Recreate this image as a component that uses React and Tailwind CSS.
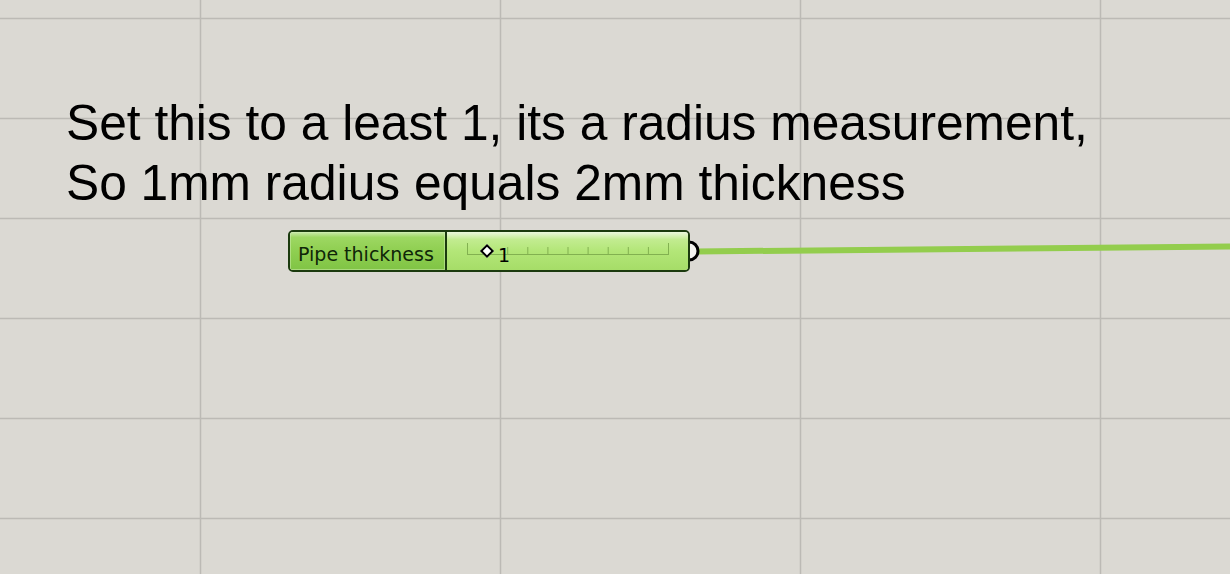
import React from 'react';

function Grid() {
  const xs = [200, 500, 800, 1100];
  const ys = [18, 118, 218, 318, 418, 518];
  return (
    <svg className="absolute inset-0" width="1230" height="574">
      {xs.map((x) => (
        <line key={'x' + x} x1={x + 0.5} y1="0" x2={x + 0.5} y2="574" stroke="#bcbab5" strokeWidth="1.5" />
      ))}
      {ys.map((y) => (
        <line key={'y' + y} x1="0" y1={y + 0.5} x2="1230" y2={y + 0.5} stroke="#bcbab5" strokeWidth="1.5" />
      ))}
    </svg>
  );
}

function Wire() {
  return (
    <svg className="absolute inset-0" width="1230" height="574">
      <path d="M696 251.5 C 900 250, 1050 248, 1230 246.5" stroke="#93cd4d" strokeWidth="6" fill="none" />
      {/* output port */}
      <path d="M689 242 A9 9 0 0 1 689 260" stroke="#000" strokeWidth="3" fill="#f4f4f0" />
    </svg>
  );
}

function Ruler() {
  const ticks = Array.from({ length: 11 }, (_, i) => i);
  return (
    <svg className="absolute left-[18px] top-[9px]" width="206" height="16">
      <line x1="2" y1="13.5" x2="203" y2="13.5" stroke="#82b150" strokeWidth="1" />
      {ticks.map((i) => {
        const x = 2.5 + i * 20.1;
        const end = i === 0 || i === 10;
        return <line key={i} x1={x} y1={end ? 2 : 6} x2={x} y2="14" stroke="#82b150" strokeWidth="1" />;
      })}
    </svg>
  );
}

function SliderNode() {
  return (
    <div className="absolute left-[288px] top-[230px] flex h-[42px] w-[402px] overflow-hidden rounded-[5px] border-2 border-[#1b3a0e]">
      <div className="flex w-[157px] items-center border-r-2 border-[#1b3a0e] bg-[linear-gradient(to_bottom,#cae9ab_0%,#9dd762_14%,#8fcf51_50%,#80c445_100%)] pl-[8px] pt-[6px] font-['DejaVu_Sans',sans-serif] text-[19px] text-[#0f2608] shadow-[inset_0_0_0_1px_rgba(210,240,180,0.5)]">
        Pipe thickness
      </div>
      <div className="relative flex-1 bg-[linear-gradient(to_bottom,#ecf8de_0%,#c2ec90_20%,#b3e678_50%,#a6dd68_100%)]">
        <Ruler />
        <div className="absolute left-[35px] top-[14px] h-[10px] w-[10px] rotate-45 border-2 border-black bg-white" />
        <div className="absolute left-[51px] top-[14px] font-['DejaVu_Sans',sans-serif] text-[19px] leading-none text-black">1</div>
      </div>
    </div>
  );
}

export default function App() {
  return (
    <div className="relative h-[574px] w-[1230px] overflow-hidden bg-[#dbd9d3]">
      <Grid />
      <Wire />
      <div className="absolute left-[66px] top-[93px] font-['Liberation_Sans',sans-serif] text-[49.7px] leading-[60px] text-black">
        <p>Set this to a least 1, its a radius measurement,</p>
        <p>So 1mm radius equals 2mm thickness</p>
      </div>
      <SliderNode />
    </div>
  );
}
